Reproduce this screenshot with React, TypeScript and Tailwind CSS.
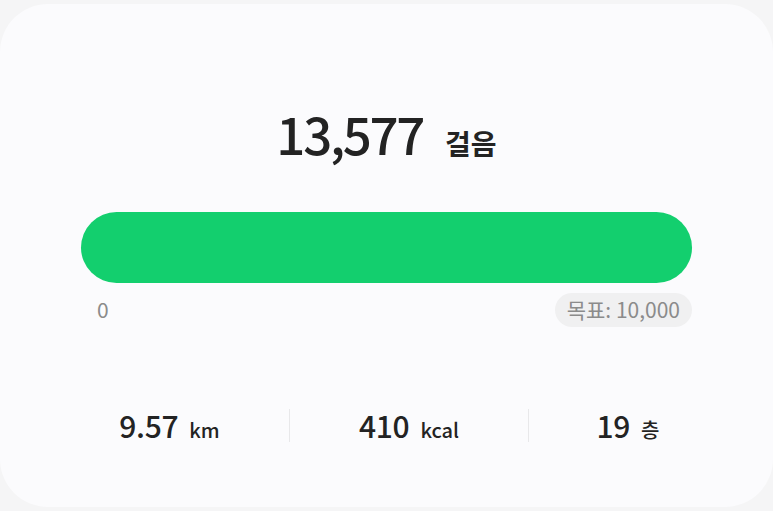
import React from "react";

// 걸음 수 카드
const stats = [
  { value: "9.57", unit: "km" },
  { value: "410", unit: "kcal" },
  { value: "19", unit: "층" },
];

export default function App() {
  return (
    <div className="w-[773px] h-[511px] bg-[#f5f5f6] pt-[4px] overflow-hidden">
      <div className="h-[503px] rounded-[48px] bg-[#fbfbfd] flex flex-col font-['Noto_Sans_CJK_KR',sans-serif]">
        {/* 걸음 수 */}
        <div className="pt-[98px] h-[167px] flex items-baseline justify-center text-[#232323]">
          <span className="text-[51px] leading-[62px] font-medium tracking-[-2.3px]">
            13,577
          </span>
          <span className="ml-[22px] text-[28px] font-bold">걸음</span>
        </div>

        {/* 진행 바 */}
        <div className="px-[81px] mt-[41px]">
          <div className="h-[71px] rounded-full bg-[#13cf6e]" />
          <div className="mt-[10px] flex items-center justify-between text-[21px] text-[#8b8b8b]">
            <span className="pl-[16px]">0</span>
            <span className="h-[34px] px-[12px] rounded-full bg-[#f0f0f1] flex items-center">
              목표: 10,000
            </span>
          </div>
        </div>

        {/* 거리 / 칼로리 / 층 */}
        <div className="mt-[73px] pl-[50px] h-[50px] grid grid-cols-[239px_1px_238px_1px_198px] items-center text-[#232323]">
          {stats.map((s, i) => (
            <React.Fragment key={s.unit}>
              {i > 0 && <div className="h-[33px] w-px bg-[#e8e8ea]" />}
              <div className="flex items-baseline justify-center">
                <span className="text-[30px] font-medium tracking-[-0.3px]">
                  {s.value}
                </span>
                <span className="ml-[11px] text-[20px] font-medium">
                  {s.unit}
                </span>
              </div>
            </React.Fragment>
          ))}
        </div>
      </div>
    </div>
  );
}
